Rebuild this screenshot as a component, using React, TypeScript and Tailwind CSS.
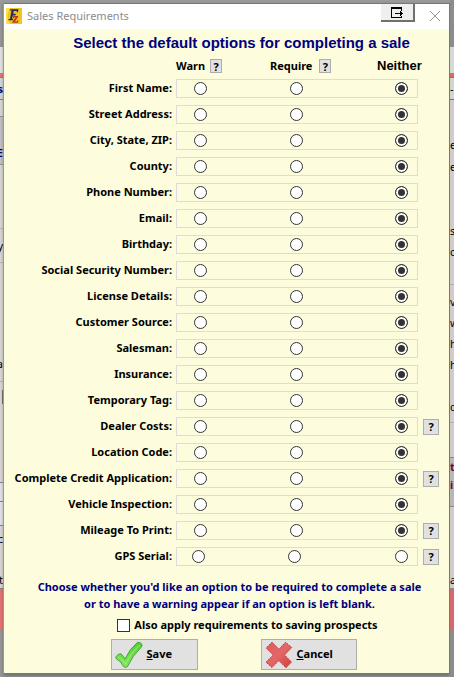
import { useState } from 'react';

type Choice = 'warn' | 'require' | 'neither';

interface Field {
    label: string;
    help?: boolean;
    initial?: Choice;
    shifted?: boolean;
}

const CHOICES: Choice[] = ['warn', 'require', 'neither'];

const FIELDS: Field[] = [
    { label: 'First Name:', initial: 'neither' },
    { label: 'Street Address:', initial: 'neither' },
    { label: 'City, State, ZIP:', initial: 'neither' },
    { label: 'County:', initial: 'neither' },
    { label: 'Phone Number:', initial: 'neither' },
    { label: 'Email:', initial: 'neither' },
    { label: 'Birthday:', initial: 'neither' },
    { label: 'Social Security Number:', initial: 'neither' },
    { label: 'License Details:', initial: 'neither' },
    { label: 'Customer Source:', initial: 'neither' },
    { label: 'Salesman:', initial: 'neither' },
    { label: 'Insurance:', initial: 'neither' },
    { label: 'Temporary Tag:', initial: 'neither' },
    { label: 'Dealer Costs:', initial: 'neither', help: true },
    { label: 'Location Code:', initial: 'neither' },
    { label: 'Complete Credit Application:', initial: 'neither', help: true },
    { label: 'Vehicle Inspection:', initial: 'neither' },
    { label: 'Mileage To Print:', initial: 'neither', help: true },
    { label: 'GPS Serial:', help: true, shifted: true },
];

// Slices of the parent window that show on either side of the dialog
interface Slice {
    className: string;
    text?: string;
}

const LEFT_SLICES: Slice[] = [
    { className: 'h-[47px]' },
    { className: 'h-[26px] bg-[#e8e8e8]' },
    { className: 'h-1 bg-[#e87878]' },
    { className: 'h-[23px] border-y border-[#888] bg-[#d4dde4] font-bold text-[#000080]', text: 's' },
    { className: 'h-4 bg-[#dfdbd8]' },
    { className: 'h-[49px] border-y border-[#999] bg-[#c6c6ca] pt-6 font-bold text-[#000080]', text: 'E' },
    { className: 'h-16 border-b border-[#bbb] bg-[#dfdbd8]' },
    { className: 'h-[34px] border-b border-[#bbb] bg-[#dfdbd8]', text: 'y' },
    { className: 'h-[83px] bg-[#dfdbd8]' },
    { className: 'h-9 border-b border-[#bbb] bg-[#dfdbd8]', text: 'a' },
    { className: 'h-2 bg-[#dfdbd8]' },
    { className: 'h-[14px] border-r border-[#777] bg-[#dfdbd8]' },
    { className: 'h-[79px] border-b border-[#888] bg-[#dfdbd8]' },
    { className: 'h-[19px] border-b border-[#888] bg-[#e8e8ec]' },
    { className: 'h-6 border-b border-[#888] bg-[#e8e8ec]' },
    { className: 'h-6 bg-[#dfdbd8]', text: 'c' },
    { className: 'h-5 bg-[#dfdbd8]' },
    { className: 'h-[19px] border-b border-[#888] bg-[#dfdbd8]', text: 't' },
    { className: 'h-10 bg-[#e87878]' },
];

const RIGHT_SLICES: Slice[] = [
    { className: 'h-[47px]' },
    { className: 'h-[26px] bg-[#d8d8d8]' },
    { className: 'h-1 bg-[#d46a6c]' },
    { className: 'h-[23px] border-y border-[#777] bg-[#cfd6ca]', text: '-' },
    { className: 'h-[33px] bg-[#d2cbc9]' },
    { className: 'h-[22px] bg-[#d2cbc9]', text: 'e' },
    { className: 'h-[22px] bg-[#d2cbc9]', text: 'e' },
    { className: 'h-[43px] bg-[#d2cbc9]' },
    { className: 'h-[21px] bg-[#d2cbc9]', text: 's' },
    { className: 'h-[21px] bg-[#d2cbc9]', text: 'c' },
    { className: 'h-[23px] border-b border-[#b5b0ae] bg-[#d2cbc9]' },
    { className: 'h-[5px] bg-[#d2cbc9]' },
    { className: 'h-[22px] bg-[#d2cbc9]', text: 'v' },
    { className: 'h-[21px] bg-[#d2cbc9]', text: 'w' },
    { className: 'h-[21px] bg-[#d2cbc9]', text: 'h' },
    { className: 'h-[21px] bg-[#d2cbc9]', text: 'h' },
    { className: 'h-[21px] bg-[#d2cbc9]' },
    { className: 'h-[21px] bg-[#d2cbc9]', text: 'c' },
    { className: 'h-[6px] border-b border-[#b5b0ae] bg-[#d2cbc9]' },
    { className: 'h-[35px] border-b border-[#888] bg-[#d2cbc9]' },
    { className: 'h-[17px] bg-[#b8b8b8] font-bold text-[#800020]', text: 't' },
    { className: 'h-8 border-b border-[#888] bg-[#b8b8b8] pb-3 font-bold text-[#800020]', text: 'i' },
    { className: 'h-[63px] bg-[#d2cbc9]' },
    { className: 'h-[19px] border-b border-[#888] bg-[#d2cbc9]', text: 'a' },
    { className: 'h-10 bg-[#d46a6c]' },
];

function AppLogo() {
    return (
        <svg viewBox="0 0 16 16" className="size-4 shrink-0" aria-hidden="true">
            <rect width="16" height="16" fill="#f3c41c" />
            <path d="M0 0h4L1.500 6v5L4 16H0z" fill="#ffe14a" />
            <path d="M4 1.300h8.500l-.6 3h-1l-.2-1.300H7.800L7.200 5.800h2.600l-.4 1.600H6.800L6.100 11h1.100l-.2 1.200H2.400l.2-1.200H4L5.500 2.600H3.800z" fill="#232a6b" />
            <path d="M7.300 7.900h5l-.3 1.200-3.100 4.300h2l.7-1.200h.9l-.7 2.600H6.400l.3-1.300 3.100-4.300H8.300l-.6 1h-.9z" fill="#b3361e" />
        </svg>
    );
}

function CheckIcon() {
    return (
        <svg viewBox="0 0 28 28" className="size-7 shrink-0" aria-hidden="true">
            <defs>
                <linearGradient id="check" x1="0" y1="0" x2="0" y2="1">
                    <stop offset="0" stopColor="#55cc3a" />
                    <stop offset="1" stopColor="#85ea5c" />
                </linearGradient>
            </defs>
            <path
                d="M1 15.800Q3 12.300 6 12.800Q8.300 15 10 18Q14.500 8 22.500 1.300Q25.500 1 27 3.500Q27.500 5 26 6.500Q17.500 14.500 12.500 25.500Q10.500 27.500 8.500 25.500Q6 20 1.500 18Q.5 17 1 15.800z"
                fill="url(#check)"
                stroke="#43a832"
                strokeLinejoin="round"
            />
            <path d="M3 15.800Q7.500 18.500 10.500 23Q15 12.500 24.500 4" fill="none" stroke="#9af078" />
        </svg>
    );
}

function CrossIcon() {
    return (
        <svg viewBox="0 0 28 28" className="size-7 shrink-0" aria-hidden="true">
            <defs>
                <linearGradient id="cross" x1="0" y1="0" x2="1" y2="1">
                    <stop offset="0" stopColor="#e05a5a" />
                    <stop offset=".5" stopColor="#e46666" />
                    <stop offset="1" stopColor="#cc4040" />
                </linearGradient>
            </defs>
            <path
                d="M7 1.200 14 8.200 20.500 1.200 26.800 6.500 19.600 14 26.500 21 21 26.800 13.800 19.600 7 26.500 1 21.200 8.200 14 1.200 7z"
                fill="url(#cross)"
                stroke="#bf3c3c"
                strokeDasharray="2 1"
                strokeLinejoin="round"
            />
        </svg>
    );
}

function HelpButton({ label, small }: { label: string; small?: boolean }) {
    return (
        <button
            type="button"
            aria-label={label}
            className={
                small
                    ? 'flex h-[14px] w-3 items-center justify-center border border-[#adadad] bg-[#e1e1e1] text-[11px] leading-none'
                    : 'flex size-4 items-center justify-center justify-self-end border border-[#adadad] bg-[#e1e1e1] text-[11px] leading-none'
            }
        >
            ?
        </button>
    );
}

function FieldRow({ field }: { field: Field }) {
    const [value, setValue] = useState<Choice | undefined>(field.initial);
    const id = field.label.replace(/\W+/g, '-').toLowerCase();

    return (
        <div role="radiogroup" aria-labelledby={id} className="grid grid-cols-[172px_1fr_21px] items-center">
            <span id={id} className="pr-1 text-right whitespace-nowrap">
                {field.label}
            </span>
            <div
                className={
                    field.shifted
                        ? 'grid h-[19px] grid-cols-[96fr_107fr_22fr] items-center border border-[#dcdcdc] pl-[15px]'
                        : 'grid h-[19px] grid-cols-[96fr_105fr_22fr] items-center border border-[#dcdcdc] pl-[17px]'
                }
            >
                {CHOICES.map((choice) => (
                    <input
                        key={choice}
                        type="radio"
                        name={id}
                        aria-label={`${field.label} ${choice}`}
                        checked={value === choice}
                        onChange={() => setValue(choice)}
                        className="size-[13px] appearance-none rounded-full border border-[#333] bg-white checked:bg-[#333] checked:shadow-[inset_0_0_0_2px_#fff]"
                    />
                ))}
            </div>
            {field.help && <HelpButton label={`Help for ${field.label}`} />}
        </div>
    );
}

function WindowEdge({ slices, side }: { slices: Slice[]; side: 'left' | 'right' }) {
    return (
        <div
            aria-hidden="true"
            className={side === 'left' ? 'w-[3px] shrink-0 overflow-hidden' : 'w-1 shrink-0 overflow-hidden bg-[#8c8c8c]'}
        >
            {slices.map((slice, i) => (
                <div key={i} className={slice.className}>
                    <div className={side === 'left' ? 'flex h-full items-center justify-end leading-none' : 'flex h-full items-center leading-none'}>
                        {slice.text}
                    </div>
                </div>
            ))}
        </div>
    );
}

export default function App() {
    const [applyToProspects, setApplyToProspects] = useState(false);

    return (
        <div className="flex min-h-screen bg-[#9a9a9a] font-['Noto_Sans',sans-serif] text-[11px] text-black">
            <WindowEdge slices={LEFT_SLICES} side="left" />
            <div role="dialog" aria-labelledby="title" className="mt-[3px] min-w-0 flex-1 self-start border border-t-[#777] border-r-[#777] border-b-[#777] border-l-[#999] bg-[#fdfddd] shadow-[0_2px_4px_rgba(0,0,0,0.3)]">
                <header className="flex h-[25px] items-start bg-white">
                    <div className="flex flex-1 items-center gap-[5px] pt-1 pl-[2px]">
                        <AppLogo />
                        <h1 id="title" className="leading-4 text-[#8c8c8c]">Sales Requirements</h1>
                    </div>
                    <button
                        type="button"
                        aria-label="Move window"
                        className="flex h-[18px] w-[34px] items-center justify-center border-r-2 border-b-2 border-[#707070] bg-[#efefef]"
                    >
                        <svg viewBox="0 0 12 11" className="h-[11px] w-3" fill="none" stroke="#000" shapeRendering="crispEdges" aria-hidden="true">
                            <path d="M10.500 3.500V.5H.5v10h10V9" />
                            <path d="M0 1h11" strokeWidth="2" />
                            <path d="M4 6.500h8M9.500 4v5M10.500 5v3" />
                        </svg>
                    </button>
                    <button type="button" aria-label="Close" className="mt-[6px] mr-[8px] ml-[14px]">
                        <svg viewBox="0 0 12 12" className="size-3" stroke="#999" aria-hidden="true">
                            <path d="M1 1l10 10M11 1L1 11" />
                        </svg>
                    </button>
                </header>

                <form className="pr-[10px] pb-[3px] font-bold" onSubmit={(e) => e.preventDefault()}>
                    <h2 className="pt-1 pl-10 text-center font-['Liberation_Sans',sans-serif] text-[15px] leading-5 text-[#000080]">
                        Select the default options for completing a sale
                    </h2>

                    <div className="mt-[3px] mb-[3px] grid h-5 grid-cols-[172px_94fr_107fr_62fr] items-center">
                        <div className="col-start-2 flex items-center gap-[5px]">
                            Warn <HelpButton small label="Help for Warn" />
                        </div>
                        <div className="flex items-center gap-[7px]">
                            Require <HelpButton small label="Help for Require" />
                        </div>
                        <div className="font-['Liberation_Sans',sans-serif] text-[13px]">Neither</div>
                    </div>

                    <div className="flex flex-col gap-[7px]">
                        {FIELDS.map((field) => (
                            <FieldRow key={field.label} field={field} />
                        ))}
                    </div>

                    <p className="mt-3 pl-4 text-center leading-[17px] text-[#000080]">
                        Choose whether you'd like an option to be required to complete a sale
                        <br />
                        or to have a warning appear if an option is left blank.
                    </p>

                    <label className="mt-1 flex h-[18px] items-center justify-center gap-1 pl-[52px]">
                        <input
                            type="checkbox"
                            checked={applyToProspects}
                            onChange={(e) => setApplyToProspects(e.target.checked)}
                            className="size-[13px] appearance-none border border-[#333] bg-white checked:bg-[#333] checked:shadow-[inset_0_0_0_2px_#fff]"
                        />
                        Also apply requirements to saving prospects
                    </label>

                    <div className="mt-[5px] flex justify-center gap-[63px] pl-6">
                        <button type="submit" className="flex h-[31px] w-[87px] items-center gap-1 border border-[#adadad] bg-[#e1e1e1] pl-[3px]">
                            <CheckIcon />
                            <span><u>S</u>ave</span>
                        </button>
                        <button type="button" className="flex h-[31px] w-24 items-center gap-1 border border-[#adadad] bg-[#e1e1e1] pl-[3px]">
                            <CrossIcon />
                            <span><u>C</u>ancel</span>
                        </button>
                    </div>
                </form>
            </div>
            <WindowEdge slices={RIGHT_SLICES} side="right" />
        </div>
    );
}
